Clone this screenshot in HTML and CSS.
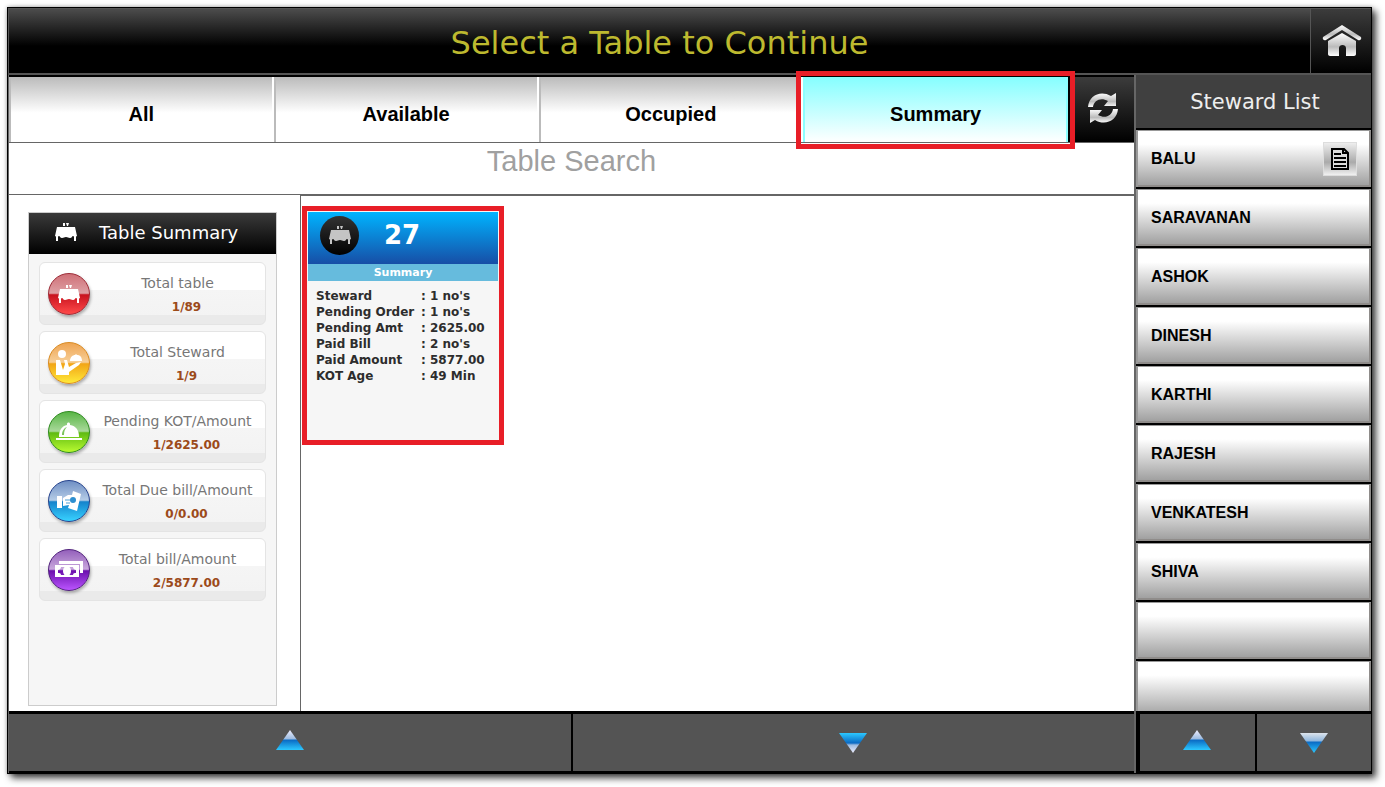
FILE: index.html
```html
<!DOCTYPE html>
<html lang="en">
<head>
    <meta charset="UTF-8">
    <meta name="viewport" content="width=device-width, initial-scale=1.0">
    <title>Select a Table</title>
    <link rel="stylesheet" href="styles.css">
</head>
<body>
    <!-- Shared icon shapes and gradients -->
    <svg class="defs" width="0" height="0" aria-hidden="true">
        <defs>
            <linearGradient id="silver" x1="0" y1="0" x2="0" y2="1">
                <stop offset="0" stop-color="#fff"/>
                <stop offset="0.6" stop-color="#bbb"/>
                <stop offset="1" stop-color="#fff"/>
            </linearGradient>
            <linearGradient id="blue-up" x1="0" y1="0" x2="0" y2="1">
                <stop offset="0" stop-color="#eef"/>
                <stop offset="0.45" stop-color="#9cbbe0"/>
                <stop offset="0.5" stop-color="#0a6ac4"/>
                <stop offset="1" stop-color="#2cc8ff"/>
            </linearGradient>
            <linearGradient id="blue-down" x1="0" y1="0" x2="0" y2="1">
                <stop offset="0" stop-color="#dde4ec"/>
                <stop offset="0.4" stop-color="#8fb6dd"/>
                <stop offset="0.45" stop-color="#0a6ac4"/>
                <stop offset="1" stop-color="#2cc8ff"/>
            </linearGradient>
            <linearGradient id="blue-flip" x1="0" y1="0" x2="0" y2="1">
                <stop offset="0" stop-color="#2cc8ff"/>
                <stop offset="0.5" stop-color="#0a6ac4"/>
                <stop offset="0.6" stop-color="#9cbbe0"/>
                <stop offset="1" stop-color="#eef"/>
            </linearGradient>
            <symbol id="table" viewBox="0 0 22 18">
                <path d="M8 0h2v3H8zM11 0h3l-1 3h-1z"/>
                <path d="M2 4h18l2 9c-1 1-3 1-4 0-1 0-1 2-3 2s-2-1-4-1-2 1-4 1-2-2-3-2c-1 1-3 1-4 0z"/>
                <path d="M1 13h2v5H1zM19 13h2v5h-2z"/>
            </symbol>
            <symbol id="waiter" viewBox="0 0 28 25">
                <circle cx="7" cy="4" r="4"/>
                <path d="M1 10h4l3 10 2-6-1-4h3l2 7 7-4 5-1-2 3-10 7v3H1z"/>
                <path d="M15 11c0-4 3-6 5-6l1-1 1 1c3 0 5 2 5 6z"/>
            </symbol>
            <symbol id="cloche" viewBox="0 0 26 19">
                <path d="M3 15C3 8 6 4 11 3V2c0-2 3-2 3 0v1c6 1 9 5 9 12z"/>
                <path d="M0 16h26v2H0z"/>
                <path d="M6 13c0-4 2-7 5-8-2 2-3 4-3 8z" class="cloche-cut"/>
            </symbol>
            <symbol id="pay" viewBox="0 0 24 20">
                <path d="M0 5h5v12H0z"/>
                <path d="M6 7l5-3h4l1-4 8 3-4 17-9-3 1-3-6 1z"/>
                <circle cx="16" cy="9" r="3" fill="#2d8fd0"/>
                <path d="M8 9h5M9 12h4" stroke="#4b9fd6" fill="none"/>
            </symbol>
            <symbol id="cash" viewBox="0 0 28 17">
                <path d="M4 0h24v12h-3V3H4z"/>
                <path fill-rule="evenodd" d="M0 4h24v12H0zM6 6c0 2-2 3-3 3v3c1 0 3 0 3 2h12c0-2 2-2 3-2V9c-1 0-3-1-3-3z"/>
                <ellipse cx="12" cy="10" rx="4" ry="5"/>
            </symbol>
        </defs>
    </svg>

    <div class="app">
        <header class="header">
            <h1>Select a Table to Continue</h1>
            <button type="button" class="home-btn" aria-label="Home">
                <svg width="40" height="32" viewBox="0 0 40 32" fill="url(#silver)">
                    <path d="M20 0L39 12c1 2-1 4-3 3L20 5 4 15c-2 1-4-1-3-3z"/>
                    <path d="M20 8l14 8v13c0 1-1 2-2 2h-8v-8c0-4-7-4-7 0v8H8c-1 0-2-1-2-2V16z"/>
                </svg>
            </button>
        </header>

        <main class="main">
            <nav class="tabs">
                <button type="button" class="tab">All</button>
                <button type="button" class="tab">Available</button>
                <button type="button" class="tab">Occupied</button>
                <button type="button" class="tab active">Summary</button>
                <button type="button" class="refresh-btn" aria-label="Refresh">
                    <svg width="30" height="30" viewBox="0 0 30 30" fill="url(#silver)">
                        <path d="M0 14C1 2 13-3 23 3l5-3v13H16l4-5C13 4 6 7 5 14z"/>
                        <path d="M30 16C29 28 17 33 7 27l-5 3V17h12l-4 5c7 4 14 1 15-6z"/>
                    </svg>
                </button>
            </nav>

            <input type="text" class="search" placeholder="Table Search" aria-label="Table Search">

            <div class="content">
                <!-- Totals for all tables -->
                <aside class="side">
                    <div class="panel">
                        <h2><svg width="22" height="18"><use href="#table"/></svg><span>Table Summary</span></h2>
                        <ul class="totals">
                            <li>
                                <span class="ball red"><svg width="22" height="18"><use href="#table"/></svg></span>
                                <p>Total table<strong>1/89</strong></p>
                            </li>
                            <li>
                                <span class="ball orange"><svg width="28" height="25"><use href="#waiter"/></svg></span>
                                <p>Total Steward<strong>1/9</strong></p>
                            </li>
                            <li>
                                <span class="ball green"><svg width="26" height="19"><use href="#cloche"/></svg></span>
                                <p>Pending KOT/Amount<strong>1/2625.00</strong></p>
                            </li>
                            <li>
                                <span class="ball blue"><svg width="24" height="20"><use href="#pay"/></svg></span>
                                <p>Total Due bill/Amount<strong>0/0.00</strong></p>
                            </li>
                            <li>
                                <span class="ball purple"><svg width="28" height="17"><use href="#cash"/></svg></span>
                                <p>Total bill/Amount<strong>2/5877.00</strong></p>
                            </li>
                        </ul>
                    </div>
                </aside>

                <!-- Occupied tables -->
                <section class="tables">
                    <article class="card">
                        <div class="card-head">
                            <span class="disc"><svg width="22" height="18" fill="#c4c4c4"><use href="#table"/></svg></span>
                            <h3>27</h3>
                        </div>
                        <h4>Summary</h4>
                        <table>
                            <tr><th>Steward</th><td>: 1 no's</td></tr>
                            <tr><th>Pending Order</th><td>: 1 no's</td></tr>
                            <tr><th>Pending Amt</th><td>: 2625.00</td></tr>
                            <tr><th>Paid Bill</th><td>: 2 no's</td></tr>
                            <tr><th>Paid Amount</th><td>: 5877.00</td></tr>
                            <tr><th>KOT Age</th><td>: 49 Min</td></tr>
                        </table>
                    </article>
                </section>
            </div>

            <div class="pager">
                <button type="button" class="up" aria-label="Tables up">
                    <svg width="28" height="20" viewBox="0 0 28 20"><path d="M14 0l14 20H0z" fill="url(#blue-up)"/></svg>
                </button>
                <button type="button" aria-label="Tables down">
                    <svg width="28" height="20" viewBox="0 0 28 20"><path d="M14 20L0 0h28z" fill="url(#blue-flip)"/></svg>
                </button>
            </div>
        </main>

        <aside class="stewards">
            <h2>Steward List</h2>
            <div class="steward-list">
                <div class="steward">
                    <button type="button">BALU</button>
                    <button type="button" class="note-btn" aria-label="Orders of BALU">
                        <svg width="18" height="22" viewBox="0 0 18 22">
                            <path d="M1 1h12l4 4v16H1z" fill="#ddd" stroke="#000" stroke-width="2"/>
                            <path d="M12 1v4h5M3 6h7M3 10h12M3 14h12M3 18h12" fill="none" stroke="#000" stroke-width="2"/>
                        </svg>
                    </button>
                </div>
                <div class="steward"><button type="button">SARAVANAN</button></div>
                <div class="steward"><button type="button">ASHOK</button></div>
                <div class="steward"><button type="button">DINESH</button></div>
                <div class="steward"><button type="button">KARTHI</button></div>
                <div class="steward"><button type="button">RAJESH</button></div>
                <div class="steward"><button type="button">VENKATESH</button></div>
                <div class="steward"><button type="button">SHIVA</button></div>
                <div class="steward"></div>
                <div class="steward"></div>
            </div>
            <div class="pager steward-pager">
                <button type="button" class="up" aria-label="Stewards up">
                    <svg width="28" height="20" viewBox="0 0 28 20"><path d="M14 0l14 20H0z" fill="url(#blue-up)"/></svg>
                </button>
                <button type="button" aria-label="Stewards down">
                    <svg width="28" height="20" viewBox="0 0 28 20"><path d="M14 20L0 0h28z" fill="url(#blue-down)"/></svg>
                </button>
            </div>
        </aside>
    </div>
</body>
</html>
```
FILE: styles.css
```css
* {
    box-sizing: border-box;
}

body {
    margin: 0;
    padding: 7px 13px 13px 7px;
    background-color: #fff;
    font-family: "DejaVu Sans", Verdana, sans-serif;
}

h1, h2, h3, h4, p, ul {
    margin: 0;
    padding: 0;
    font-weight: normal;
}

button {
    margin: 0;
    padding: 0;
    border: none;
    background: none;
    font-family: "Liberation Sans", Arial, sans-serif;
    font-weight: bold;
    color: #000;
    cursor: pointer;
}

svg {
    display: block;
}

.defs {
    position: absolute;
}

.app {
    display: grid;
    grid-template-columns: minmax(0, 1fr) 237px;
    grid-template-rows: 67px minmax(0, 1fr);
    height: calc(100vh - 20px);
    min-height: 640px;
    border: 1px solid #000;
    background-color: #fff;
    box-shadow: 4px 4px 7px rgba(0, 0, 0, 0.75), 0 0 4px rgba(0, 0, 0, 0.3);
}

/* Header */
.header {
    grid-column: 1 / 3;
    display: flex;
    border: 1px solid #555;
    border-width: 1px 0 2px 1px;
    background: linear-gradient(#4c4c4c, #000 58%);
}

.header h1 {
    flex: 1;
    padding-top: 14px;
    font-size: 32px;
    line-height: 40px;
    text-align: center;
    color: #bdb92f;
}

.home-btn {
    display: flex;
    justify-content: center;
    align-items: center;
    width: 61px;
    padding-left: 2px;
    border-left: 1px solid #555;
    background: linear-gradient(#3c3c3c, #000);
}

/* Main area */
.main {
    display: flex;
    flex-direction: column;
    border-left: 1px solid #666;
}

.tabs {
    display: flex;
    height: 67px;
    border-top: 2px solid #000;
    background-color: #000;
}

.tab {
    position: relative;
    flex: 1;
    padding-top: 10px;
    border-left: 2px solid #bbb;
    border-right: 2px solid #fff;
    background: linear-gradient(#bbb, #fff 55%);
    font-size: 20px;
}

.tab.active {
    border-color: #8cffff;
    background: linear-gradient(#85feff, #fff);
}

/* Selection frame */
.tab.active::after {
    content: "";
    position: absolute;
    inset: -6px -9px -7px;
    border: 5px solid #e81e27;
    z-index: 1;
}

.refresh-btn {
    display: flex;
    justify-content: center;
    align-items: center;
    width: 66px;
    padding: 0 0 4px 2px;
    border-left: 2px solid #000;
    background: linear-gradient(#3c3c3c, #000);
}

.search {
    height: 53px;
    padding: 0 0 14px;
    border: 1px solid #666;
    border-width: 1px 0;
    border-radius: 0;
    background-color: #fff;
    font-family: "Liberation Sans", Arial, sans-serif;
    font-size: 29px;
    text-align: center;
}

.search::placeholder {
    color: #a0a0a0;
    opacity: 1;
}

.content {
    display: flex;
    flex: 1;
    min-height: 0;
}

.side {
    width: 292px;
    padding: 17px 23px 5px 19px;
    border-right: 1px solid #666;
}

.panel {
    height: 100%;
    border: 1px solid #ccc;
    background-color: #f6f6f6;
}

.panel h2 {
    display: flex;
    align-items: center;
    gap: 22px;
    height: 41px;
    padding: 0 0 3px 26px;
    background: linear-gradient(#3a3a3a, #000);
    font-size: 18px;
    color: #fff;
    fill: #fff;
}

.totals {
    display: flex;
    flex-direction: column;
    gap: 6px;
    padding: 8px 10px;
    list-style: none;
}

.totals li {
    display: flex;
    align-items: center;
    height: 63px;
    padding-left: 8px;
    border: 1px solid #e4e4e4;
    border-radius: 6px;
    background: linear-gradient(#fff 44%, #f5f5f5 44%, #f3f3f3 86%, #eaeaea 86%);
}

.totals p {
    flex: 1;
    padding-top: 3px;
    font-size: 14px;
    line-height: 24px;
    text-align: center;
    white-space: nowrap;
    color: #777;
}

.totals strong {
    display: block;
    padding-left: 18px;
    font-size: 12px;
    color: #9c4a1a;
}

.ball {
    display: flex;
    justify-content: center;
    align-items: center;
    width: 42px;
    height: 42px;
    border-radius: 50%;
    box-shadow: 1px 2px 3px rgba(0, 0, 0, 0.3);
    fill: #fff;
}

.red {
    border: 1px solid #9c2a35;
    background: linear-gradient(#cf7078, #dea0a4 48%, #c8131f 52%, #ff4a4a);
}

.orange {
    border: 1px solid #d98a20;
    background: linear-gradient(#efa552, #f7cf98 48%, #f2a516 52%, #ffe93a);
}

.green {
    border: 1px solid #2c8a1c;
    background: linear-gradient(#58b545, #a9d99a 48%, #5fbb12 52%, #b8fa30);
}

.blue {
    border: 1px solid #23418c;
    background: linear-gradient(#6f8fc4, #b5cce6 48%, #1583cc 52%, #38d2ff);
}

.purple {
    border: 1px solid #50207c;
    background: linear-gradient(#9460bb, #c9a8dd 48%, #6b10ad 52%, #bb55ff);
}

.cloche-cut {
    fill: #7cc45c;
}

/* Table cards */
.tables {
    flex: 1;
    padding: 10px 1px;
    border-top: 1px solid #666;
}

.card {
    width: 202px;
    height: 239px;
    padding: 1px;
    border: 5px solid #e81e27;
    background-color: #f6f6f6;
}

.card-head {
    display: flex;
    align-items: center;
    gap: 25px;
    height: 52px;
    padding: 0 0 6px 12px;
    background: linear-gradient(#00b4ff, #174ea6);
}

.disc {
    display: flex;
    justify-content: center;
    align-items: center;
    width: 39px;
    height: 39px;
    border-radius: 50%;
    background: linear-gradient(#333, #000);
}

.card h3 {
    font-size: 26px;
    font-weight: bold;
    color: #fff;
}

.card h4 {
    font-size: 11px;
    font-weight: bold;
    line-height: 17px;
    text-align: center;
    background-color: #66bbdd;
    color: #fff;
}

.card table {
    width: 100%;
    margin-top: 7px;
    padding-left: 8px;
    border-spacing: 0;
    font-size: 12px;
    line-height: 16px;
    color: #2d2d2d;
}

.card th, .card td {
    padding: 0;
    text-align: left;
    font-weight: bold;
}

.card th {
    width: 105px;
}

/* Steward list */
.stewards {
    display: flex;
    flex-direction: column;
    min-height: 0;
    border-left: 2px solid #666;
}

.stewards h2 {
    height: 55px;
    padding-left: 3px;
    border-bottom: 2px solid #000;
    background-color: #404040;
    font-size: 21px;
    line-height: 54px;
    text-align: center;
    color: #eee;
}

.steward-list {
    flex: 1;
    min-height: 0;
    overflow: hidden;
}

.steward {
    display: flex;
    align-items: center;
    height: 59px;
    padding-right: 14px;
    border-bottom: 2px solid #000;
    background: linear-gradient(#fff 25%, #9c9c9c);
    box-shadow: inset 2px 1px #999, inset -2px -2px #8f8c8a;
}

.steward button {
    flex: 1;
    height: 100%;
    padding-left: 15px;
    font-size: 16px;
    text-align: left;
}

.steward .note-btn {
    display: flex;
    flex: none;
    justify-content: center;
    align-items: center;
    width: 34px;
    height: 34px;
    padding: 0;
    border: 1px solid #ddd;
    background: linear-gradient(#eee, #aaa 60%, #f0f0f0);
}

/* Up and down buttons */
.pager {
    display: flex;
    gap: 2px;
    height: 62px;
    border: 1px solid #000;
    border-width: 3px 0 2px;
    background-color: #000;
}

.pager button {
    display: flex;
    flex: 1;
    justify-content: center;
    align-items: center;
    background-color: #545454;
}

.pager .up {
    padding-bottom: 5px;
}

.steward-pager {
    padding-left: 4px;
}
```
